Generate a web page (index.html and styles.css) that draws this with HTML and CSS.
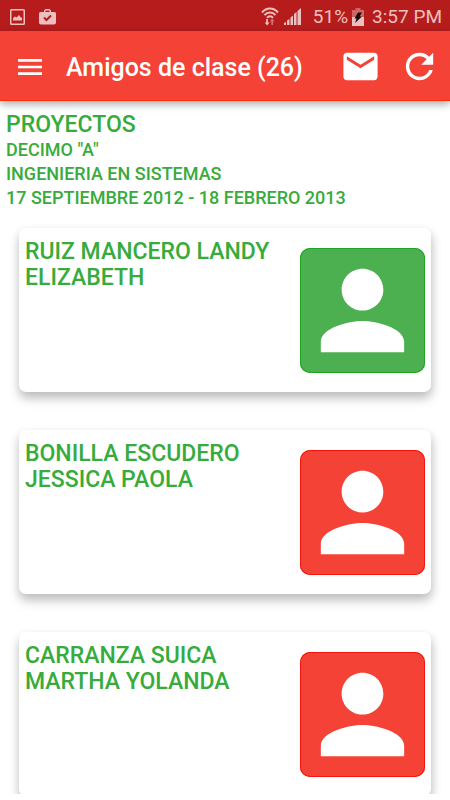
FILE: index.html
```
<!DOCTYPE html>
<html lang="es">
<head>
  <meta charset="UTF-8">
  <meta name="viewport" content="width=device-width, initial-scale=1.0">
  <title>Amigos de clase</title>
  <link rel="stylesheet" href="styles.css">
</head>
<body>
  <svg class="sprite" aria-hidden="true">
    <symbol id="person" viewBox="0 0 24 24">
      <path d="M12 12c2.21 0 4-1.79 4-4s-1.79-4-4-4-4 1.79-4 4 1.79 4 4 4zm0 2c-2.67 0-8 1.34-8 4v2h16v-2c0-2.66-5.33-4-8-4z"/>
    </symbol>
  </svg>

  <div class="status-bar">
    <svg class="icon-picture" viewBox="0 0 15 16">
      <path fill-rule="evenodd" d="M1.500 0h12a1.500 1.500 0 0 1 1.500 1.500v13a1.500 1.500 0 0 1-1.500 1.500h-12a1.500 1.500 0 0 1-1.500-1.500v-13a1.500 1.500 0 0 1 1.500-1.500zM1.500 1.500v13h12v-13z"/>
      <path d="M3 11.500V9l2-1.500 1.500 1 2.500-2.500 1.500 2 1.500 1v2.500z"/>
    </svg>
    <svg class="icon-work" viewBox="0 0 17 16">
      <path fill-rule="evenodd" d="M5 3V1.500L6.500 0h4L12 1.500V3h3.500A1.500 1.500 0 0 1 17 4.500v9a2 2 0 0 1-2 2H2a2 2 0 0 1-2-2v-9A1.500 1.500 0 0 1 1.500 3zM6.500 3h4V1.500h-4z"/>
      <path class="dark-stroke" d="M5 8.500l2.500 2.500 4.500-4.500"/>
    </svg>
    <div class="status-right">
      <svg class="icon-wifi" viewBox="0 0 18 19">
        <g class="light-stroke">
          <path d="M1 5.500c4.500-5.300 11.500-5.300 16 0"/>
          <path d="M3.500 8.200c3-3.500 8-3.500 11 0"/>
          <path d="M6 10.800c1.700-2 4.300-2 6 0"/>
        </g>
        <path d="M5.200 12h1.800v3.500h1.500L6.100 18.500 3.700 15.500h1.500z"/>
        <path opacity=".5" d="M10.300 18h1.800v-3.500h1.500L11.200 11.500 8.800 14.500h1.500z"/>
      </svg>
      <svg class="icon-signal" viewBox="0 0 17 17">
        <path d="M0 17v-2l2-1v3zM3 17v-4.500l2.500-1.500v6zM6.500 17V9.500L9 7.500V17zM10 17V6l2.500-2v13zM13.500 17V3L17 0v17z"/>
      </svg>
      <span class="battery-level">51%</span>
      <svg class="icon-battery" viewBox="0 0 12 18">
        <path opacity=".45" d="M3.500 0h5v2H12v7H0V2h3.500z"/>
        <path d="M0 9h12v9H0z"/>
        <path fill="#1c0505" d="M6 4.500h4L7.500 8.500H10L3 15l1.500-4.500H2.500z"/>
      </svg>
      <span>3:57 PM</span>
    </div>
  </div>

  <header class="app-bar">
    <button class="menu-button" aria-label="Menú">
      <svg viewBox="0 0 24 24"><path d="M3 18h18v-2H3v2zm0-5h18v-2H3v2zm0-7v2h18V6H3z"/></svg>
    </button>
    <h1>Amigos de clase (26)</h1>
    <button class="action" aria-label="Enviar correo">
      <svg viewBox="0 0 24 24"><path d="M20 4H4c-1.100 0-2 .9-2 2v12c0 1.100.9 2 2 2h16c1.100 0 2-.9 2-2V6c0-1.100-.9-2-2-2zm0 4l-8 5-8-5V6l8 5 8-5v2z"/></svg>
    </button>
    <button class="action" aria-label="Actualizar">
      <svg viewBox="0 0 24 24"><path d="M17.650 6.350C16.200 4.900 14.210 4 12 4c-4.420 0-7.990 3.580-7.990 8s3.570 8 7.990 8c3.730 0 6.840-2.550 7.730-6h-2.080c-.82 2.330-3.040 4-5.650 4-3.310 0-6-2.690-6-6s2.690-6 6-6c1.660 0 3.140.69 4.220 1.780L13 11h7V4l-2.350 2.350z"/></svg>
    </button>
  </header>

  <main>
    <section class="course">
      <h2>PROYECTOS</h2>
      <p>DECIMO "A"</p>
      <p>INGENIERIA EN SISTEMAS</p>
      <p>17 SEPTIEMBRE 2012 - 18 FEBRERO 2013</p>
    </section>

    <div class="students">
      <article class="card">
        <h3>RUIZ MANCERO LANDY ELIZABETH</h3>
        <div class="avatar green"><svg><use href="#person"/></svg></div>
      </article>
      <article class="card">
        <h3>BONILLA ESCUDERO JESSICA PAOLA</h3>
        <div class="avatar red"><svg><use href="#person"/></svg></div>
      </article>
      <article class="card">
        <h3>CARRANZA SUICA MARTHA YOLANDA</h3>
        <div class="avatar red"><svg><use href="#person"/></svg></div>
      </article>
    </div>
  </main>
</body>
</html>
```
FILE: styles.css
```
* {
  box-sizing: border-box;
}
body {
  margin: 0;
  height: 100vh;
  display: flex;
  flex-direction: column;
  padding-bottom: 6px;
  font-family: Roboto, sans-serif;
  background: #fff;
  color: #37ab3c;
}
h1, h2, h3, p {
  margin: 0;
  font-weight: 500;
}
svg {
  display: block;
  fill: currentColor;
}
.sprite {
  position: absolute;
  width: 0;
  height: 0;
}

/* Status bar */
.status-bar {
  flex: none;
  display: flex;
  align-items: center;
  gap: 14px;
  height: 31px;
  padding: 2px 8px 0 10px;
  background: #b71c1c;
  color: #edc0c0;
  font-size: 19px;
}
.status-right {
  display: flex;
  align-items: center;
  margin-left: auto;
}
.icon-picture {
  width: 15px;
  height: 16px;
}
.icon-work {
  width: 17px;
  height: 16px;
}
.icon-wifi {
  width: 18px;
  height: 19px;
  margin-right: 5px;
}
.icon-signal {
  width: 17px;
  height: 17px;
  margin-right: 12px;
}
.icon-battery {
  width: 12px;
  height: 18px;
  margin: 0 8px 0 4px;
}
.dark-stroke {
  fill: none;
  stroke: #b71c1c;
  stroke-width: 2;
}
.light-stroke {
  fill: none;
  stroke: currentColor;
  stroke-width: 2;
}

/* App bar */
.app-bar {
  position: relative;
  z-index: 1;
  flex: none;
  display: flex;
  align-items: center;
  height: 70px;
  padding: 2px 10px 0 14px;
  background: #f44336;
  border-bottom: 1px solid #ff2a0c;
  color: #fff;
  box-shadow: 0 3px 8px rgba(0, 0, 0, 0.35);
}
.app-bar h1 {
  flex: 1;
  padding-top: 2px;
  font-size: 25px;
  line-height: 30px;
}
button {
  padding: 0;
  border: none;
  background: none;
  color: inherit;
  cursor: pointer;
}
.menu-button {
  margin-right: 20px;
}
.menu-button svg {
  width: 32px;
  height: 32px;
}
.action {
  margin-left: 18px;
}
.action svg {
  width: 41px;
  height: 41px;
}

/* Course info */
main {
  flex: 1;
  min-height: 0;
  overflow-x: hidden;
  overflow-y: auto;
  scrollbar-width: none;
}
.course {
  padding: 10px 6px 0;
}
.course h2 {
  font-size: 23px;
  line-height: 27px;
}
.course p {
  font-size: 18px;
  line-height: 24px;
}

/* Student cards */
.students {
  display: flex;
  flex-direction: column;
  gap: 38px;
  padding: 18px 19px 38px;
}
.card {
  display: flex;
  justify-content: space-between;
  min-height: 164px;
  padding: 10px 6px 19px;
  border-radius: 7px;
  background: #fff;
  box-shadow: 0 7px 12px rgba(0, 0, 0, 0.16), 1px 4px 10px rgba(0, 0, 0, 0.14);
}
.card h3 {
  flex: 1;
  padding-top: 1px;
  font-size: 23px;
  line-height: 26px;
}
.avatar {
  flex: none;
  width: 125px;
  height: 125px;
  margin-top: 10px;
  border-radius: 10px;
  color: #fff;
}
.avatar svg {
  width: 100%;
  height: 100%;
}
.green {
  background: #4caf50;
  box-shadow: inset 0 0 0 1px #1ea522;
}
.red {
  background: #f44336;
  box-shadow: inset 0 0 0 1px #f5150c;
}
```
